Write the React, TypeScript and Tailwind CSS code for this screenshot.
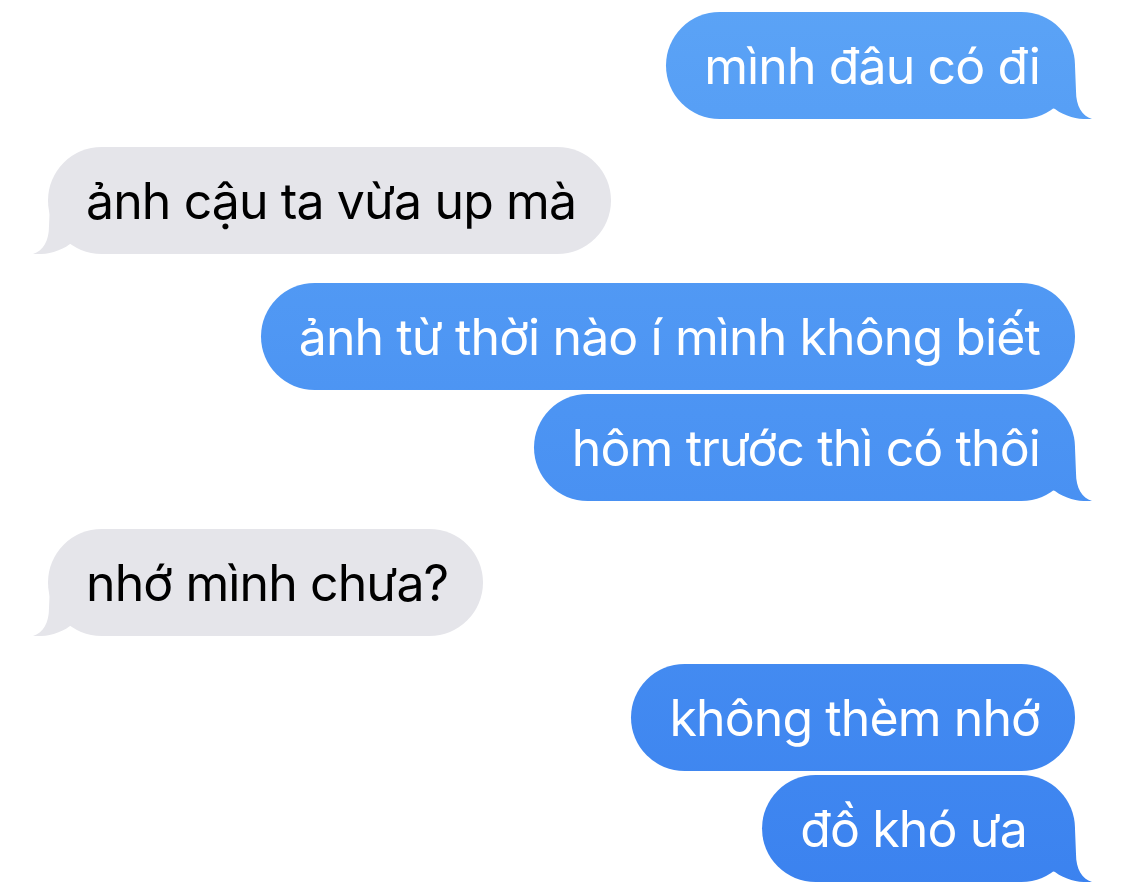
import React from "react";

type Msg = { text: string; me: boolean; tail: boolean; mt: string; pr?: string };

const msgs: Msg[] = [
  { text: "mình đâu có đi", me: true, tail: true, mt: "mt-[12px]" },
  { text: "ảnh cậu ta vừa up mà", me: false, tail: true, mt: "mt-[28px]" },
  { text: "ảnh từ thời nào í mình không biết", me: true, tail: false, mt: "mt-[29px]" },
  { text: "hôm trước thì có thôi", me: true, tail: true, mt: "mt-[4px]" },
  { text: "nhớ mình chưa?", me: false, tail: true, mt: "mt-[28px]" },
  { text: "không thèm nhớ", me: true, tail: false, mt: "mt-[28px]" },
  { text: "đồ khó ưa", me: true, tail: true, mt: "mt-[4px]", pr: "pr-[48px]" },
];

const blue = "bg-fixed bg-gradient-to-b from-[#5ba3f6] to-[#3b82ef]";

function Bubble({ m }: { m: Msg }) {
  return (
    <div className={`flex ${m.me ? "justify-end pr-[50px]" : "justify-start pl-[48px]"} ${m.mt}`}>
      <div
        className={`relative flex h-[107px] items-center rounded-[54px] pl-[38px] ${m.pr ?? "pr-[35px]"} ${
          m.me ? `${blue} text-white` : "bg-[#e5e5ea] text-black"
        }`}
      >
        {m.tail && (
          <div
            className={`absolute bottom-0 h-[53px] w-[45px] [clip-path:path('M0,0_L28,0_L29,25_C29,40_35,50_45,53_C35,54_20,52_8,43_L0,40_Z')] ${
              m.me ? `right-[-17px] ${blue}` : "left-[-15px] -scale-x-100 bg-[#e5e5ea]"
            }`}
          />
        )}
        <span className="relative whitespace-nowrap font-['Inter','Roboto',sans-serif] text-[50px] leading-none tracking-[-0.9px]">
          {m.text}
        </span>
      </div>
    </div>
  );
}

export default function App() {
  return (
    <div className="h-[894px] w-[1125px] overflow-hidden bg-white">
      {msgs.map((m, i) => (
        <Bubble key={i} m={m} />
      ))}
    </div>
  );
}
